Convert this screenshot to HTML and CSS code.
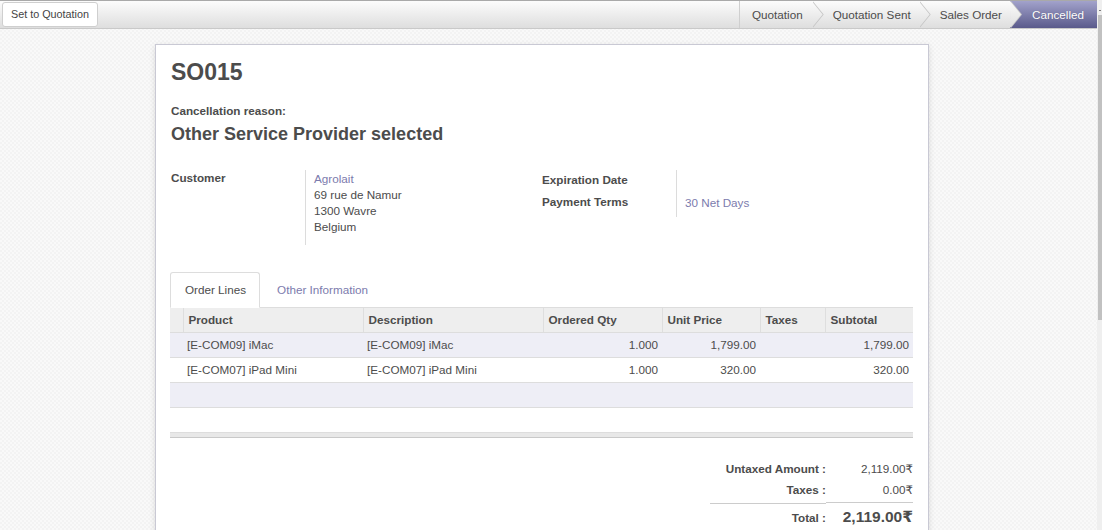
FILE: index.html
```html
<!DOCTYPE html>
<html>
<head>
<meta charset="utf-8">
<title>SO015</title>
<link rel="stylesheet" href="styles.css">
</head>
<body>
<div class="page">
  <div class="control-bar">
    <div class="actions"><button class="btn">Set to Quotation</button></div>
    <ul class="statusbar">
      <li class="step first">Quotation</li>
      <li class="step">Quotation Sent</li>
      <li class="step">Sales Order</li>
      <li class="step active">Cancelled</li>
    </ul>
  </div>
  <div class="content">
    <div class="sheet">
      <h1 class="title">SO015</h1>
      <div class="reason-label">Cancellation reason:</div>
      <div class="reason">Other Service Provider selected</div>

      <div class="groups">
        <div class="group group-left">
          <div class="label">Customer</div>
          <div class="value address"><span class="link">Agrolait</span><br>69 rue de Namur<br>1300 Wavre<br>Belgium</div>
        </div>
        <div class="group group-right">
          <div class="label row1">Expiration Date</div>
          <div class="value row1"></div>
          <div class="label row2">Payment Terms</div>
          <div class="value row2"><span class="link">30 Net Days</span></div>
        </div>
      </div>

      <div class="notebook">
        <ul class="tabs">
          <li class="tab active">Order Lines</li>
          <li class="tab">Other Information</li>
        </ul>
        <table class="lines">
          <colgroup>
            <col class="c-handle"><col class="c-product"><col class="c-desc"><col class="c-qty"><col class="c-price"><col class="c-taxes"><col class="c-subtotal">
          </colgroup>
          <thead>
            <tr>
              <th></th><th>Product</th><th>Description</th><th>Ordered Qty</th><th>Unit Price</th><th>Taxes</th><th>Subtotal</th>
            </tr>
          </thead>
          <tbody>
            <tr class="odd">
              <td></td><td>[E-COM09] iMac</td><td>[E-COM09] iMac</td><td class="num">1.000</td><td class="num">1,799.00</td><td></td><td class="num">1,799.00</td>
            </tr>
            <tr>
              <td></td><td>[E-COM07] iPad Mini</td><td>[E-COM07] iPad Mini</td><td class="num">1.000</td><td class="num">320.00</td><td></td><td class="num">320.00</td>
            </tr>
            <tr class="odd empty">
              <td></td><td></td><td></td><td></td><td></td><td></td><td></td>
            </tr>
          </tbody>
        </table>
        <div class="list-footer"></div>
      </div>

      <div class="totals-wrap">
        <div class="totals">
          <div class="t-label">Untaxed Amount :</div><div class="t-value">2,119.00₹</div>
          <div class="t-label pad-b">Taxes :</div><div class="t-value pad-b">0.00₹</div>
          <div class="t-label total">Total :</div><div class="t-value total big">2,119.00₹</div>
        </div>
      </div>
    </div>
  </div>
</div>
<div class="scrollbar"><div class="scroll-arrow"></div><div class="scroll-thumb"></div></div>
</body>
</html>
```

FILE: styles.css
```css
html, body {
  height: 100%;
}
body {
  margin: 0;
  overflow: hidden;
  font-family: "Liberation Sans", Arial, "DejaVu Sans", sans-serif;
  font-size: 11.7px;
  line-height: 16px;
  color: #4c4c4c;
  background-color: #f6f6f6;
  background-image: repeating-conic-gradient(#f3f3f3 0 25%, #f9f9f9 0 50%);
  background-size: 4px 4px;
}
.page {
  margin-right: 5px;
}

/* ---------- fake scrollbar (overlay) ---------- */
.scrollbar {
  position: fixed;
  top: 0;
  right: 0;
  width: 5px;
  height: 100%;
  background: #efefef;
}
.scroll-arrow {
  position: absolute;
  top: 10px;
  left: 2px;
  width: 2px;
  height: 1px;
  background: #7a7a7a;
}
.scroll-thumb {
  position: absolute;
  top: 15px;
  left: 1px;
  width: 4px;
  height: 305px;
  background: #c1c1c1;
}

/* ---------- control bar ---------- */
.control-bar {
  display: flex;
  justify-content: space-between;
  height: 27px;
  border-top: 1px solid #a9a9a9;
  border-bottom: 1px solid #c9c9c9;
  background: linear-gradient(#fcfcfc, #dedede);
}
.actions {
  padding: 1px 0 0 2px;
}
.btn {
  height: 25px;
  padding: 0 8px;
  margin: 0;
  border: 1px solid #cfcfcf;
  border-radius: 3px;
  background: #ffffff;
  color: #444444;
  font-family: "Liberation Sans", Arial, sans-serif;
  font-size: 10.8px;
  line-height: 23px;
  cursor: pointer;
}
.statusbar {
  display: flex;
  list-style: none;
  margin: 0;
  padding: 0;
  height: 27px;
}
.step {
  position: relative;
  padding: 0 8px 0 21px;
  font-size: 11.7px;
  line-height: 27px;
  color: #4c4c4c;
  background: linear-gradient(#fcfcfc, #dedede);
  white-space: nowrap;
}
.step.first {
  border-left: 1px solid #cfcfcf;
  padding-left: 12px;
  padding-right: 9px;
}
.step:not(.active)::before,
.step:not(.active)::after {
  content: "";
  position: absolute;
  top: 0;
  bottom: 0;
  left: 100%;
  width: 11px;
  clip-path: polygon(0 0, 100% 50%, 0 100%);
  z-index: 1;
}
.step:not(.active)::before {
  margin-left: 1px;
  background: #c4c4c4;
}
.step:not(.active)::after {
  background: linear-gradient(#fcfcfc, #dedede);
}
.step.active {
  padding-left: 22px;
  padding-right: 13px;
  color: #ffffff;
  background: linear-gradient(#a2a2cb, #5a5a8b);
  text-shadow: 0 0 1px rgba(0, 0, 0, 0.25);
}

/* ---------- sheet ---------- */
.content {
  padding: 15px 0 25px 155px;
}
.sheet {
  box-sizing: border-box;
  width: 774px;
  min-height: 800px;
  padding: 15px 15px 20px;
  background: #ffffff;
  border: 1px solid #c9c9d4;
  box-shadow: 0 2px 6px rgba(0, 0, 0, 0.12);
}
.title {
  margin: 0;
  font-size: 23px;
  line-height: 25px;
  font-weight: bold;
  color: #4c4c4c;
}
.reason-label {
  margin-top: 18px;
  font-weight: bold;
}
.reason {
  margin-top: 4px;
  font-size: 18px;
  line-height: 22px;
  font-weight: bold;
}

.link {
  color: #7c7bad;
}

/* ---------- groups ---------- */
.groups {
  display: flex;
  margin-top: 25px;
}
.group {
  flex: 1 1 0;
  display: grid;
  grid-template-columns: 134px 1fr;
  align-content: start;
}
.label {
  font-weight: bold;
}
.value {
  border-left: 1px solid #dcdcdc;
  padding-left: 8px;
}
.address {
  padding-top: 1px;
  padding-bottom: 10px;
}
.label.row1 {
  height: 22px;
  box-sizing: border-box;
  padding-top: 2px;
}
.value.row1 {
  height: 22px;
  box-sizing: border-box;
}
.label.row2 {
  height: 25px;
  box-sizing: border-box;
  padding-top: 2px;
}
.value.row2 {
  height: 25px;
  box-sizing: border-box;
  padding-top: 3px;
}

/* ---------- notebook ---------- */
.notebook {
  margin: 27px 0 0 -1px;
}
.tabs {
  display: flex;
  list-style: none;
  margin: 0;
  padding: 0;
  border-bottom: 1px solid #dddddd;
}
.tab {
  margin: 0 2px -1px 0;
  padding: 9px 15px 9px 14px;
  border: 1px solid transparent;
  border-radius: 3px 3px 0 0;
  color: #7c7bad;
}
.tab.active {
  padding: 9px 13px 9px 14px;
  color: #4c4c4c;
  background: #ffffff;
  border-color: #dddddd #dddddd transparent;
}

.lines {
  width: 743px;
  table-layout: fixed;
  border-collapse: collapse;
}
.c-handle { width: 13px; }
.c-product { width: 180px; }
.c-desc { width: 180px; }
.c-qty { width: 119px; }
.c-price { width: 98px; }
.c-taxes { width: 65px; }
.c-subtotal { width: 88px; }

.lines th {
  height: 24px;
  padding: 0 4px 0 5px;
  text-align: left;
  font-weight: bold;
  background: #eeeeee;
  border-left: 1px solid #dedede;
  border-bottom: 1px solid #dddddd;
  white-space: nowrap;
  overflow: hidden;
}
.lines th:first-child {
  border-left: none;
}
.lines td {
  height: 24px;
  padding: 0 4px;
  border-bottom: 1px solid #dddddd;
  white-space: nowrap;
  overflow: hidden;
}
.lines tr.odd td {
  background: #eeeef6;
}
.lines td.num {
  text-align: right;
}

.list-footer {
  margin-top: 24px;
  height: 4px;
  background: #e8e8e8;
  border-top: 1px solid #dddddd;
  border-bottom: 1px solid #c9c9c9;
}

/* ---------- totals ---------- */
.totals-wrap {
  display: flex;
  justify-content: flex-end;
  margin-top: 23px;
}
.totals {
  width: 203px;
  display: grid;
  grid-template-columns: 1fr 87px;
  align-items: baseline;
}
.t-label {
  text-align: right;
  font-weight: bold;
  line-height: 16px;
  padding-bottom: 5px;
}
.t-value {
  text-align: right;
  line-height: 16px;
  padding-bottom: 5px;
}
.pad-b {
  padding-bottom: 4px;
}
.total {
  border-top: 1px solid #cccccc;
  padding-top: 4px;
  padding-bottom: 0;
}
.t-value.big {
  font-size: 15.5px;
  line-height: 20px;
  font-weight: bold;
}
.t-label.total {
  padding-top: 6px;
}
```
